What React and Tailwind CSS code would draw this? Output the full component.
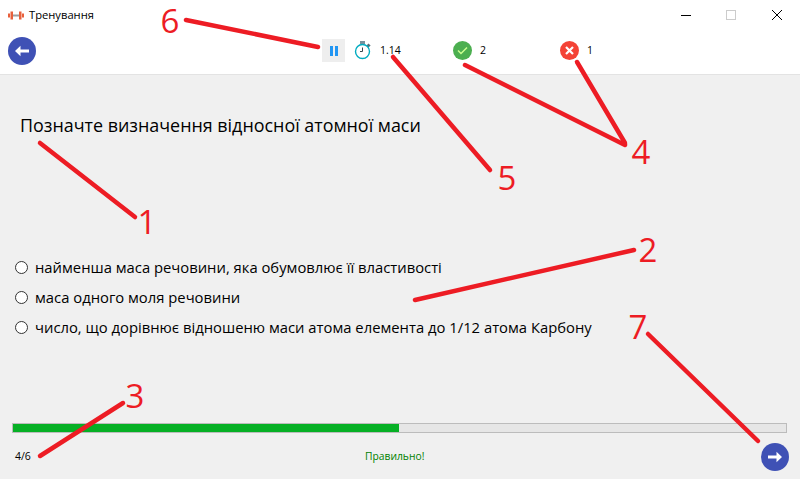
const font = { fontFamily: '"Open Sans", "Noto Sans", sans-serif' };

function RoundArrow({ dir }) {
  return (
    <button className="w-7 h-7 rounded-full bg-[#3f51b5] flex items-center justify-center shrink-0">
      <svg width="16" height="12" viewBox="0 0 16 12">
        {dir === 'left' ? (
          <path d="M1 6 L6.5 0.8 V4.4 H15 V7.6 H6.5 V11.2 Z" fill="#fff" />
        ) : (
          <path d="M15 6 L9.5 0.8 V4.4 H1 V7.6 H9.5 V11.2 Z" fill="#fff" />
        )}
      </svg>
    </button>
  );
}

function Radio({ children }) {
  return (
    <label className="flex items-center h-[30px]">
      <span className="w-[13px] h-[13px] rounded-full border border-[#333] bg-white shrink-0 ml-[15px] mr-[7px] -mt-[2px]" />
      <span className="text-[14.8px] text-black whitespace-nowrap -mt-[2px]">{children}</span>
    </label>
  );
}

function Annotations() {
  const lines = [
    [186, 20, 318, 47],
    [393, 57, 490, 170],
    [465, 65, 625, 145],
    [577, 62, 625, 143],
    [40, 143, 135, 217],
    [415, 300, 634, 250],
    [40, 456, 123, 403],
    [648, 334, 758, 441],
  ];
  const numbers = [
    ['6', 'left-[170px] top-[4px]'],
    ['5', 'left-[507px] top-[161px]'],
    ['4', 'left-[641px] top-[135px]'],
    ['1', 'left-[147px] top-[205px]'],
    ['2', 'left-[648px] top-[233px]'],
    ['3', 'left-[135px] top-[379px]'],
    ['7', 'left-[638px] top-[310px]'],
  ];
  return (
    <>
      <svg className="absolute inset-0 pointer-events-none" width="800" height="479" viewBox="0 0 800 479">
        {lines.map(([x1, y1, x2, y2], i) => (
          <line key={i} x1={x1} y1={y1} x2={x2} y2={y2} stroke="#ed1c24" strokeWidth="4.5" strokeLinecap="round" />
        ))}
      </svg>
      {numbers.map(([n, pos]) => (
        <span key={n} className={`absolute -translate-x-1/2 text-[33px] leading-[33px] text-[#ed1c24] ${pos}`}>
          {n}
        </span>
      ))}
    </>
  );
}

export default function App() {
  return (
    <div className="relative w-[800px] h-[479px] overflow-hidden bg-[#f0f0f0] flex flex-col" style={font}>
      <div className="h-[30px] bg-white flex items-center shrink-0">
        <svg className="ml-2" width="16" height="9" viewBox="0 0 16 9">
          <rect x="0" y="2.5" width="2" height="4" fill="#e8603c" />
          <rect x="2.5" y="0.5" width="2.5" height="8" fill="#e8603c" />
          <rect x="5" y="3.5" width="6" height="2" fill="#9e9e9e" />
          <rect x="11" y="0.5" width="2.5" height="8" fill="#e8603c" />
          <rect x="14" y="2.5" width="2" height="4" fill="#e8603c" />
        </svg>
        <span className="ml-[5px] text-[11.2px] text-black">Тренування</span>
        <div className="ml-auto flex items-center">
          <svg className="mr-[35px]" width="10" height="1" viewBox="0 0 10 1">
            <rect width="10" height="1" fill="#000" />
          </svg>
          <span className="w-[10px] h-[10px] border border-[#ccc] mr-[36px]" />
          <svg className="mr-[18px]" width="10" height="10" viewBox="0 0 10 10">
            <path d="M0 0 L10 10 M10 0 L0 10" stroke="#000" strokeWidth="1" />
          </svg>
        </div>
      </div>

      <div className="h-[45px] bg-white border-b border-[#e3e3e3] flex items-center pl-2 pb-[3px] shrink-0">
        <RoundArrow dir="left" />
        <div className="ml-[286px] w-[23px] h-[23px] bg-[#eeeeee] flex items-center justify-center gap-[2px]">
          <span className="w-[3px] h-[10px] bg-[#2196f3]" />
          <span className="w-[3px] h-[10px] bg-[#2196f3]" />
        </div>
        <svg className="ml-[9px]" width="17" height="20" viewBox="0 0 17 20">
          <rect x="6" y="0" width="5" height="3" fill="#78909c" />
          <rect x="13" y="3" width="3" height="3" fill="#546e7a" transform="rotate(45 14.5 4.5)" />
          <circle cx="8.5" cy="10.5" r="7" fill="#fff" stroke="#00acc1" strokeWidth="1.4" />
          <path d="M8.5 6.5 V10.5 H6" fill="none" stroke="#37474f" strokeWidth="1" />
        </svg>
        <span className="ml-[9px] w-[73px] text-[10.5px] text-black">1.14</span>
        <span className="w-[19px] h-[19px] rounded-full bg-[#4caf50] flex items-center justify-center">
          <svg width="11" height="9" viewBox="0 0 11 9">
            <path d="M1 4.5 L4 7.5 L10 1.5" fill="none" stroke="#ccff90" strokeWidth="1.5" />
          </svg>
        </span>
        <span className="ml-2 w-[80px] text-[10.5px] text-black">2</span>
        <span className="w-[19px] h-[19px] rounded-full bg-[#f44336] flex items-center justify-center">
          <svg width="9" height="9" viewBox="0 0 9 9">
            <path d="M1 1 L8 8 M8 1 L1 8" stroke="#fff" strokeWidth="2.2" />
          </svg>
        </span>
        <span className="ml-2 text-[10.5px] text-black">1</span>
      </div>

      <div className="flex-1 flex flex-col min-h-0">
        <h1 className="mt-[38px] ml-[20px] text-[17.9px] font-normal leading-6 text-black whitespace-nowrap">
          Позначте визначення відносної атомної маси
        </h1>
        <div className="mt-[116px] flex flex-col">
          <Radio>найменша маса речовини, яка обумовлює її властивості</Radio>
          <Radio>маса одного моля речовини</Radio>
          <Radio>число, що дорівнює відношеню маси атома елемента до 1/12 атома Карбону</Radio>
        </div>
        <div className="mt-[80px] ml-3 mr-[13px] h-[10px] border border-[#bcbcbc] bg-[#e6e6e6]">
          <div className="h-full w-[386px] bg-[#06b025]" />
        </div>
        <div className="mt-[10px] flex items-center pl-[15px] pr-[11px] h-7">
          <span className="w-[350px] text-[10.5px] text-black">4/6</span>
          <span className="text-[10.3px] text-[#008000]">Правильно!</span>
          <div className="ml-auto">
            <RoundArrow dir="right" />
          </div>
        </div>
      </div>

      <Annotations />
    </div>
  );
}
